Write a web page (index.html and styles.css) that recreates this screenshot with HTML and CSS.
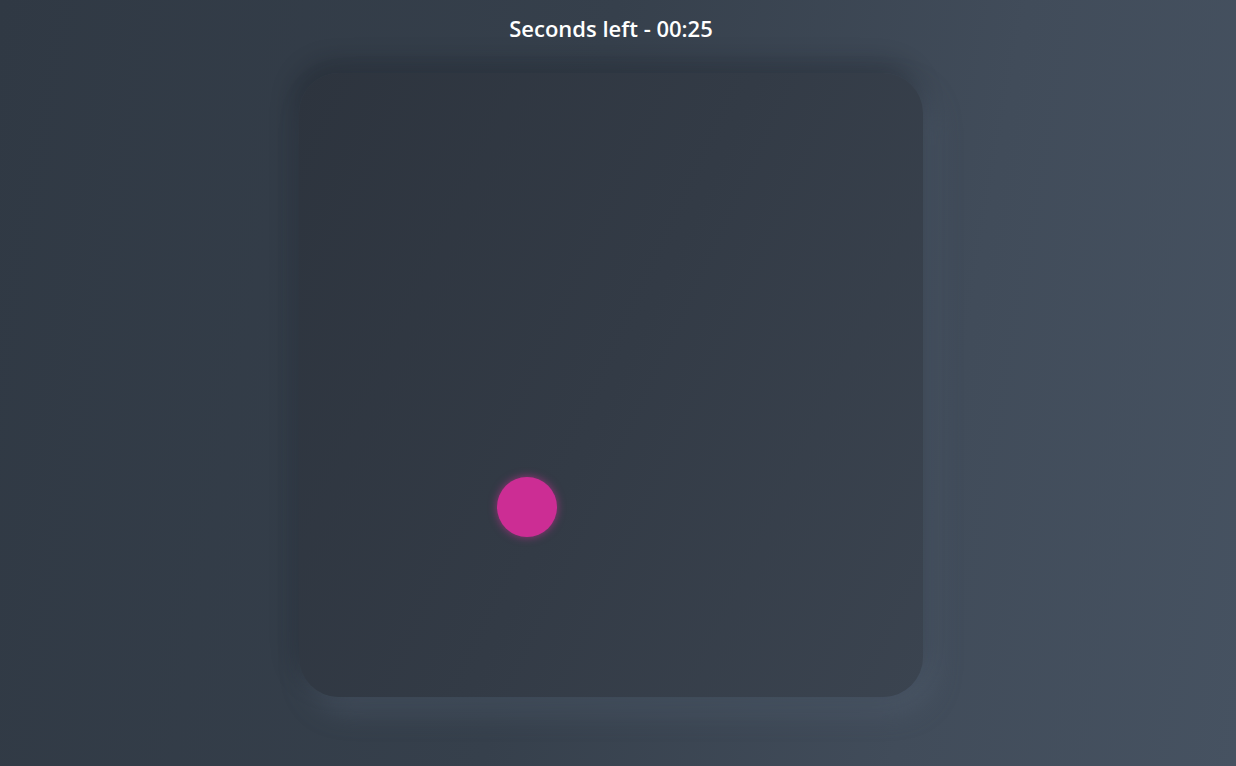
FILE: index.html
```html
<!DOCTYPE html>
<html>
<head>
<meta charset="utf-8">
<link rel="stylesheet" href="styles.css">
</head>
<body>
<main class="page">
  <h1 class="timer">Seconds left - 00:25</h1>
  <div class="board">
    <div class="ball" style="left: 198px; top: 404px;"></div>
  </div>
</main>
</body>
</html>
```
FILE: styles.css
```css
html, body {
  margin: 0;
  height: 100%;
}
body {
  background: linear-gradient(100deg, #303944 0%, #36404c 45%, #414c5a 75%, #465261 100%);
  font-family: "Open Sans", "Noto Sans", sans-serif;
  overflow: hidden;
}
.page {
  display: flex;
  flex-direction: column;
  align-items: center;
  padding-right: 14px;
}
.timer {
  margin: 13px 0 0;
  font-size: 22px;
  font-weight: 600;
  color: #ffffff;
  line-height: 30px;
}
.board {
  position: relative;
  margin-top: 30px;
  width: 624px;
  height: 624px;
  border-radius: 40px;
  background: linear-gradient(115deg, #2d343e 0%, #333b46 50%, #3b4450 100%);
  box-shadow: -4px -10px 24px rgba(16, 20, 26, 0.3), 10px 14px 28px rgba(84, 98, 116, 0.45);
}
.ball {
  position: absolute;
  width: 60px;
  height: 60px;
  border-radius: 50%;
  background: #cc2d94;
  box-shadow: 0 0 8px rgba(220, 50, 160, 0.6);
}
```
